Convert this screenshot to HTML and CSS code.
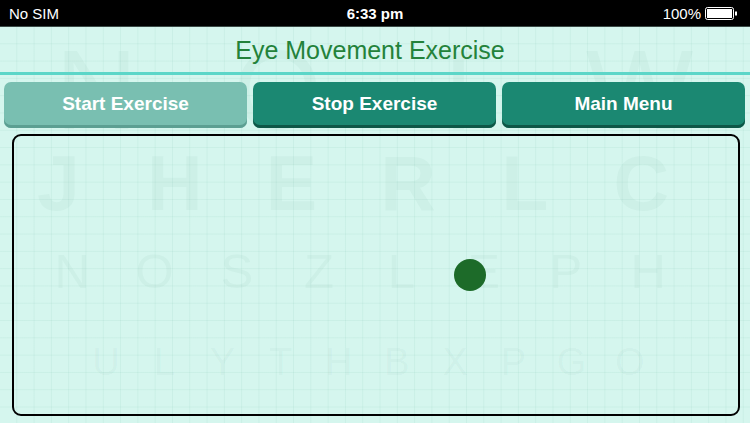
FILE: index.html
```html
<!DOCTYPE html>
<html>
<head>
<meta charset="utf-8">
<link rel="stylesheet" href="styles.css">
</head>
<body>
<div class="status">
  <span class="carrier">No SIM</span>
  <span class="time">6:33 pm</span>
  <span class="battery">100%
    <svg width="33" height="13" viewBox="0 0 33 13"><rect x="0.5" y="0.5" width="28" height="12" rx="2" fill="none" stroke="#fff"/><rect x="2" y="2" width="25" height="9" fill="#fff"/><rect x="30" y="4.5" width="2" height="4" fill="#fff"/></svg>
  </span>
</div>
<div class="app">
  <div class="chart" aria-hidden="true">
    <div class="row r1"><span>N</span><span>O</span><span>T</span><span>W</span></div>
    <div class="row r2"><span>J</span><span>H</span><span>E</span><span>R</span><span>L</span><span>C</span></div>
    <div class="row r3"><span>N</span><span>O</span><span>S</span><span>Z</span><span>L</span><span>E</span><span>P</span><span>H</span></div>
    <div class="row r4"><span>U</span><span>L</span><span>Y</span><span>T</span><span>H</span><span>B</span><span>X</span><span>P</span><span>G</span><span>O</span></div>
  </div>
  <div class="content">
    <header class="header"><h1>Eye Movement Exercise</h1></header>
    <nav class="toolbar">
      <button class="btn btn-disabled">Start Exercise</button>
      <button class="btn">Stop Exercise</button>
      <button class="btn">Main Menu</button>
    </nav>
    <div class="board">
      <div class="dot"></div>
    </div>
  </div>
</div>
</body>
</html>
```
FILE: styles.css
```css
html, body {
  margin: 0;
  padding: 0;
}
body {
  width: 750px;
  height: 423px;
  overflow: hidden;
  font-family: "Liberation Sans", Arial, sans-serif;
  background-color: #d5f6ee;
}
.status {
  background: #000;
  border-bottom: 1px solid #3a4a46;
  color: #fff;
  font-size: 15px;
  display: flex;
  align-items: center;
  justify-content: space-between;
  padding: 0 12px 0 9px;
  position: relative;
  box-sizing: border-box;
  height: 27px;
}
.time {
  position: absolute;
  left: 0;
  right: 0;
  text-align: center;
  font-weight: 700;
}
.battery {
  display: flex;
  align-items: center;
  gap: 4px;
}
.app {
  position: relative;
  height: 396px;
  background-color: #d5f6ee;
  background-image:
    linear-gradient(to right, rgba(120, 190, 170, 0.12) 1px, transparent 1px),
    linear-gradient(to bottom, rgba(120, 190, 170, 0.12) 1px, transparent 1px);
  background-size: 17.3px 17.3px;
  background-position: -1px -1px;
}
.chart {
  position: absolute;
  inset: 0;
  color: rgba(40, 110, 90, 0.045);
  overflow: hidden;
}
.row {
  position: absolute;
  left: 0;
  display: flex;
  line-height: 1;
}
.row span {
  text-align: center;
}
.r1 { top: 6px; font-size: 114px; padding-left: 6px; font-weight: 400; }
.r1 span { width: 181px; }
.r2 { top: 118px; font-size: 77px; padding-left: 0; font-weight: 700; }
.r2 span { width: 116.6px; }
.r3 { top: 220px; font-size: 49px; padding-left: 31px; }
.r3 span { width: 82.3px; }
.r4 { top: 316px; font-size: 38px; padding-left: 77px; }
.r4 span { width: 58.2px; }
.content {
  position: relative;
  display: flex;
  flex-direction: column;
}
.header {
  height: 45px;
  border-bottom: 3px solid #5cd6c8;
  display: flex;
  align-items: center;
  justify-content: center;
}
.header h1 {
  margin: 0;
  font-weight: 400;
  font-size: 25px;
  color: #23823a;
  padding-top: 2px;
  padding-right: 10px;
}
.toolbar {
  display: grid;
  grid-template-columns: 1fr 1fr 1fr;
  gap: 6px;
  padding: 7px 5px 0 4px;
}
.btn {
  height: 46px;
  border: none;
  border-radius: 7px;
  background: #1b8872;
  box-shadow: inset 0 -3px 0 #0e5747;
  color: #fff;
  font-family: "Liberation Sans", Arial, sans-serif;
  font-weight: 700;
  font-size: 19px;
  padding: 0 0 3px;
}
.btn-disabled {
  background: #79bfb1;
  box-shadow: inset 0 -3px 0 #5c9f92;
}
.board {
  position: relative;
  margin: 6px 10px 0 12px;
  height: 278px;
  border: 2px solid #000;
  border-radius: 9px;
}
.dot {
  position: absolute;
  left: 440px;
  top: 123px;
  width: 32px;
  height: 32px;
  border-radius: 50%;
  background: #1d6b29;
}
```
